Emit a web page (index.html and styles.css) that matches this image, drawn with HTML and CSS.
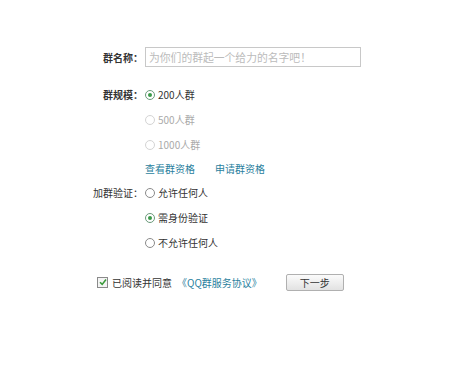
FILE: index.html
```html
<!DOCTYPE html>
<html lang="zh">
<head>
<meta charset="utf-8">
<link rel="stylesheet" href="styles.css">
</head>
<body>
<div class="form">
  <div class="row row-name">
    <div class="label bold">群名称：</div>
    <div class="field"><div class="input">为你们的群起一个给力的名字吧！</div></div>
  </div>
  <div class="row">
    <div class="label bold">群规模：</div>
    <div class="field"><span class="radio on"></span><span>200人群</span></div>
  </div>
  <div class="row">
    <div class="label"></div>
    <div class="field disabled"><span class="radio off"></span><span>500人群</span></div>
  </div>
  <div class="row">
    <div class="label"></div>
    <div class="field disabled"><span class="radio off"></span><span>1000人群</span></div>
  </div>
  <div class="row row-links">
    <div class="label"></div>
    <div class="field"><a class="link">查看群资格</a><a class="link second">申请群资格</a></div>
  </div>
  <div class="row">
    <div class="label">加群验证：</div>
    <div class="field"><span class="radio"></span><span>允许任何人</span></div>
  </div>
  <div class="row">
    <div class="label"></div>
    <div class="field"><span class="radio on"></span><span>需身份验证</span></div>
  </div>
  <div class="row">
    <div class="label"></div>
    <div class="field"><span class="radio"></span><span>不允许任何人</span></div>
  </div>
  <div class="agree">
    <span class="check"><svg width="8" height="8" viewBox="0 0 8 8"><path d="M1 4.2 L3.2 6.4 L7 1.6" fill="none" stroke="#3a9a3a" stroke-width="1.6"/></svg></span>
    <span class="agree-text">已阅读并同意</span>
    <a class="link proto">《QQ群服务协议》</a>
    <span class="btn">下一步</span>
  </div>
</div>
</body>
</html>
```
FILE: styles.css
```css
html, body {
  margin: 0;
  padding: 0;
  background: #fff;
}
body {
  width: 473px;
  height: 374px;
  font-family: "Noto Sans CJK SC", "Liberation Sans", sans-serif;
  font-size: 10px;
  color: #333;
}
.form {
  padding-top: 46px;
}
.row {
  display: flex;
  align-items: center;
  height: 25px;
}
.row-name {
  height: 22px;
  margin-bottom: 14px;
}
.row-links {
  height: 23px;
}
.label {
  width: 143px;
  text-align: right;
  flex: none;
}
.bold {
  font-weight: bold;
}
.field {
  display: flex;
  align-items: center;
  margin-left: 2px;
}
.input {
  width: 211px;
  height: 18px;
  line-height: 18px;
  border: 1px solid #c8c8c8;
  padding-left: 3px;
  color: #bbb;
  font-size: 10.8px;
}
.radio {
  width: 8px;
  height: 8px;
  border: 1px solid #8a8a8a;
  border-radius: 50%;
  margin-right: 3px;
  position: relative;
  flex: none;
}
.radio.on::after {
  content: "";
  position: absolute;
  left: 2px;
  top: 2px;
  width: 4px;
  height: 4px;
  border-radius: 50%;
  background: #3b9a4a;
}
.radio.on {
  border-color: #6a9a7a;
}
.disabled {
  color: #aaa;
}
.disabled .radio {
  border-color: #d4d4d4;
}
.link {
  color: #2b7f9e;
  text-decoration: none;
}
.link.second {
  margin-left: 20px;
}
.agree {
  display: flex;
  align-items: center;
  margin-top: 18px;
  padding-left: 97px;
  height: 18px;
}
.check {
  width: 9px;
  height: 9px;
  border: 1px solid #8a8a8a;
  display: flex;
  align-items: center;
  justify-content: center;
  margin-right: 4px;
  background: #f4f4f4;
}
.agree-text {
  color: #333;
}
.proto {
  margin-left: 5px;
}
.btn {
  margin-left: 24px;
  width: 56px;
  height: 15px;
  line-height: 15px;
  text-align: center;
  border: 1px solid #b0b0b0;
  border-radius: 2px;
  background: linear-gradient(#fbfbfb, #e2e2e2);
  color: #333;
}
```
